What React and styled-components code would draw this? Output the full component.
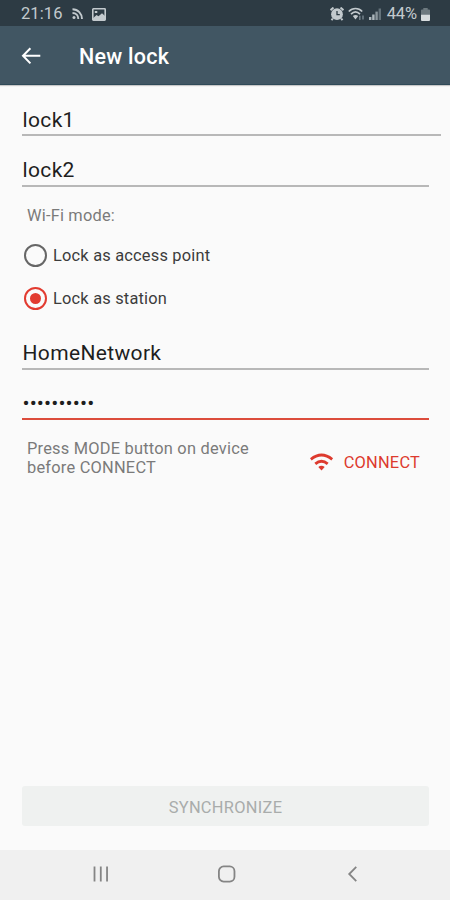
import React, { useState } from "react";
import styled, { createGlobalStyle } from "styled-components";

const GlobalStyle = createGlobalStyle`
  * {
    box-sizing: border-box;
  }

  body {
    margin: 0;
    background-color: #fafafa;
    font-family: Roboto, "Liberation Sans", sans-serif;
  }

  button, input {
    font-family: inherit;
  }
`;

const Screen = styled.div`
  display: flex;
  flex-direction: column;
  width: 100%;
  height: 100vh;
  overflow: hidden;
  background-color: #fafafa;
`;

const StatusBar = styled.div`
  display: flex;
  flex-shrink: 0;
  align-items: center;
  justify-content: space-between;
  height: 26px;
  padding: 2px 20px 0 21px;
  background-color: #2d3b44;
  color: #c3cace;
`;

const StatusGroup = styled.div`
  display: flex;
  align-items: center;
  gap: ${(props) => props.$gap};

  svg {
    display: block;
  }
`;

const StatusText = styled.span`
  margin-left: ${(props) => props.$indent || "0"};
  font-size: 16.5px;
  line-height: 24px;
  letter-spacing: ${(props) => props.$spacing || "0"};
`;

const AppBar = styled.header`
  display: flex;
  flex-shrink: 0;
  align-items: center;
  height: 59px;
  padding: 2px 20px 0;
  border-bottom: 1px solid #2f4a58;
  background-color: #415663;
  box-shadow: 0 1px 1px rgba(0, 0, 0, 0.2);
`;

const BackButton = styled.button`
  display: flex;
  width: 59px;
  padding: 0;
  border: none;
  background: none;
  color: #ffffff;
`;

const Title = styled.h1`
  margin: 1px 0 0;
  color: #ffffff;
  font-size: 21.5px;
  font-weight: 500;
  letter-spacing: 0.25px;
`;

const Form = styled.main`
  display: flex;
  flex: 1;
  flex-direction: column;
  padding: 18px 21px 24px 22px;
`;

const Field = styled.input`
  display: block;
  flex-shrink: 0;
  width: ${(props) => (props.$wide ? "419px" : "100%")};
  height: 33px;
  margin: ${(props) => props.$margin || "0"};
  padding: ${(props) => props.$padding || "1px 0 1px 0.5px"};
  border: none;
  border-bottom: 2px solid ${(props) => (props.$active ? "#dc4c3c" : "#b8b8b8")};
  outline: none;
  background: transparent;
  color: #1e1e1e;
  font-size: 21px;
  letter-spacing: ${(props) => props.$spacing || "0.35px"};
`;

const ModeLabel = styled.div`
  margin: 18px 0 0 5px;
  color: #7a7a7a;
  font-size: 16.4px;
  line-height: 22px;
  letter-spacing: 0.2px;
`;

const RadioGroup = styled.div`
  display: flex;
  flex-direction: column;
  gap: 19px;
  margin: 16px 0 0 2px;
`;

const RadioRow = styled.div`
  display: flex;
  align-items: center;
  gap: 6px;
  height: 24px;
  color: #3c3c3c;
  font-size: 16.4px;
  letter-spacing: 0.2px;
`;

const RadioMark = styled.span`
  display: flex;
  align-items: center;
  justify-content: center;
  width: 23px;
  height: 23px;
  border: 2px solid ${(props) => (props.$checked ? "#e23b30" : "#666666")};
  border-radius: 50%;

  &::after {
    content: "";
    display: ${(props) => (props.$checked ? "block" : "none")};
    width: 11px;
    height: 11px;
    border-radius: 50%;
    background-color: #e23b30;
  }
`;

const ConnectRow = styled.div`
  display: flex;
  align-items: center;
  justify-content: space-between;
  margin-top: 19px;
  padding: 0 9px 0 5px;
`;

const Hint = styled.p`
  margin: 0;
  color: #7a7a7a;
  font-size: 16.4px;
  line-height: 19px;
  letter-spacing: 0.22px;
`;

const ConnectButton = styled.button`
  display: flex;
  align-items: center;
  gap: 10px;
  margin-top: 8px;
  padding: 0;
  border: none;
  background: none;
  color: #dd3a2e;
  font-size: 16.4px;
  letter-spacing: 0.2px;
`;

const SyncButton = styled.button`
  height: 40px;
  margin-top: auto;
  border: none;
  border-radius: 3px;
  padding: 2px 0 0;
  background-color: #eff1f0;
  color: #a9acab;
  font-size: 16.4px;
  letter-spacing: 0.3px;
`;

const NavBar = styled.nav`
  display: flex;
  flex-shrink: 0;
  align-items: center;
  height: 50px;
  padding: 0 89px 2px;
  background-color: #f0f0f0;
  color: #858585;

  svg:nth-child(2) {
    margin: 0 110px 0 105px;
  }
`;

const RssIcon = () => (
  <svg width="11" height="12" viewBox="0 0 11 12" fill="none" stroke="currentColor">
    <path d="M0.5 1.2C6 1.2 10 5.5 10 11M0.5 5C4 5 6.3 7.5 6.3 11" strokeWidth="1.9" />
    <circle cx="2" cy="9.6" r="1.5" fill="currentColor" stroke="none" />
  </svg>
);

const ImageIcon = () => (
  <svg width="14" height="13" viewBox="0 0 14 13">
    <rect x="0.8" y="0.8" width="12.4" height="11.4" rx="0.6" fill="none" stroke="currentColor" strokeWidth="1.6" />
    <rect x="2.8" y="3" width="2.5" height="2" fill="currentColor" />
    <path d="M1 10.2 4.5 7 6.5 8.2 10 5.2 13 8V12H1Z" fill="currentColor" />
  </svg>
);

const AlarmIcon = () => (
  <svg width="14" height="14" viewBox="0 0 14 14">
    <path d="M0.5 3.2 3.5 0.6M13.5 3.2 10.5 0.6M2.8 11.5 1.5 13.2M11.2 11.5 12.5 13.2" stroke="currentColor" strokeWidth="2" />
    <circle cx="7" cy="7.2" r="5.9" fill="currentColor" />
    <path d="M7 4V7.6H9.8" fill="none" stroke="#2d3b44" strokeWidth="1.3" />
  </svg>
);

const StatusWifiIcon = () => (
  <svg width="17" height="14" viewBox="0 0 17 14">
    <path d="M0.8 4.5C4.5 0.5 10.5 0.5 14.2 4.5M3 7.2C5.8 4.4 9.2 4.4 12 7.2" fill="none" stroke="currentColor" strokeWidth="1.7" />
    <path d="M4.8 9Q7.5 6.8 10.2 9L7.5 12.4Z" fill="currentColor" />
    <path d="M11.8 8.8V13M15 8.4V12.6" stroke="#74828a" strokeWidth="1.5" />
  </svg>
);

const SignalIcon = () => (
  <svg width="12" height="12" viewBox="0 0 12 12">
    <path d="M0 9H2.4V12H0ZM3.2 6.6H5.6V12H3.2Z" fill="#aeb8bd" />
    <path d="M6.4 3.6H8.8V12H6.4Z" fill="#8b979d" />
    <path d="M9.6 0.5H12V12H9.6Z" fill="#64727a" />
  </svg>
);

const BatteryIcon = () => (
  <svg width="9" height="13" viewBox="0 0 9 13">
    <path d="M0 2.2Q0 1.4 1 1.4H2.3V0H6.7V1.4H8Q9 1.4 9 2.2V7H0Z" fill="#6d797f" />
    <path d="M0 6.8H9V12Q9 13 8 13H1Q0 13 0 12Z" fill="#d7dcde" />
  </svg>
);

const BackArrowIcon = () => (
  <svg width="22" height="18" viewBox="0 0 22 18" fill="none" stroke="currentColor" strokeWidth="2">
    <path d="M10.4 1.2 3 8.8 10.4 16.4M3 8.8H20.3" />
  </svg>
);

const WifiIcon = () => (
  <svg width="24" height="18" viewBox="0 0 24 18">
    <path d="M0.8 6.3Q11.5 -2.3 22.2 6.3M5.3 10.9Q11.5 5.7 17.7 10.9" fill="none" stroke="currentColor" strokeWidth="2.8" />
    <path d="M8.3 13.9Q11.5 11.6 14.7 13.9L11.5 17.6Z" fill="currentColor" />
  </svg>
);

const RecentsIcon = () => (
  <svg width="24" height="20" viewBox="0 0 24 20" fill="none" stroke="currentColor" strokeWidth="1.9">
    <path d="M5.8 2V18M12.4 2V18M19 2V18" />
  </svg>
);

const HomeIcon = () => (
  <svg width="20" height="20" viewBox="0 0 20 20" fill="none" stroke="currentColor" strokeWidth="1.9">
    <rect x="2" y="2" width="16.4" height="16" rx="5" />
  </svg>
);

const NavBackIcon = () => (
  <svg width="16" height="20" viewBox="0 0 16 20" fill="none" stroke="currentColor" strokeWidth="1.9">
    <path d="M10.8 2.6 3.4 10 10.8 17.4" />
  </svg>
);

const modes = [
  { id: "ap", label: "Lock as access point" },
  { id: "station", label: "Lock as station" },
];

const App = () => {
  const [mode, setMode] = useState("station");

  return (
    <Screen>
      <GlobalStyle />

      <StatusBar>
        <StatusGroup $gap="9px">
          <StatusText $spacing="0.1px">21:16</StatusText>
          <RssIcon />
          <ImageIcon />
        </StatusGroup>
        <StatusGroup $gap="4px">
          <AlarmIcon />
          <StatusWifiIcon />
          <SignalIcon />
          <StatusText $indent="2px" $spacing="-0.1px">
            44%
          </StatusText>
          <BatteryIcon />
        </StatusGroup>
      </StatusBar>

      <AppBar>
        <BackButton aria-label="Back">
          <BackArrowIcon />
        </BackButton>
        <Title>New lock</Title>
      </AppBar>

      <Form>
        <Field $wide $padding="2px 0 0 0.5px" defaultValue="lock1" />
        <Field $margin="18px 0 0" defaultValue="lock2" />

        <ModeLabel>Wi-Fi mode:</ModeLabel>
        <RadioGroup>
          {modes.map(({ id, label }) => (
            <RadioRow key={id} onClick={() => setMode(id)}>
              <RadioMark $checked={mode === id} />
              {label}
            </RadioRow>
          ))}
        </RadioGroup>

        <Field $margin="27px 0 0" defaultValue="HomeNetwork" />
        <Field
          $active
          $margin="17px 0 0"
          $padding="1px 0 0 0.5px"
          $spacing="0.1px"
          type="password"
          defaultValue="homelock01"
        />

        <ConnectRow>
          <Hint>
            Press MODE button on device
            <br />
            before CONNECT
          </Hint>
          <ConnectButton>
            <WifiIcon />
            CONNECT
          </ConnectButton>
        </ConnectRow>

        <SyncButton disabled>SYNCHRONIZE</SyncButton>
      </Form>

      <NavBar>
        <RecentsIcon />
        <HomeIcon />
        <NavBackIcon />
      </NavBar>
    </Screen>
  );
};

export default App;
